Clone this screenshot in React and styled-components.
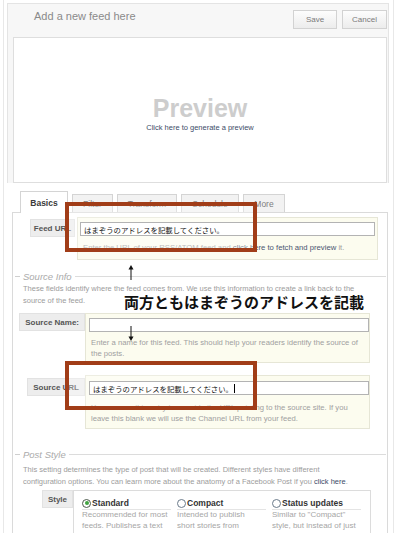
import styled, { createGlobalStyle } from "styled-components";

const FONT = `"Liberation Sans", Arial, "Noto Sans CJK JP", sans-serif`;
const JP_FONT = `"Noto Sans CJK JP", "Liberation Sans", sans-serif`;
const NOTE_RED = "#a13d18";

const GlobalStyle = createGlobalStyle`
  html, body {
    margin: 0;
    padding: 0;
    background: #fff;
  }
  * {
    box-sizing: border-box;
  }
`;

const Page = styled.div`
  position: relative;
  isolation: isolate;
  width: 401px;
  height: 533px;
  overflow: hidden;
  background: #fff;
  font-family: ${FONT};
`;

const Frame = styled.div`
  margin-left: 3px;
  width: 391px;
  height: 100%;
  padding-top: 3px;
  border-left: 1px solid #e8e8e8;
  border-right: 1px solid #e8e8e8;
`;

const Card = styled.div`
  margin-left: 3px;
  width: 382px;
  padding: 0 1px 0 5px;
  background: #f7f7f7;
  border: 1px solid #e4e4e4;
  border-bottom: none;
`;

const Header = styled.div`
  height: 33px;
  display: flex;
  align-items: flex-start;
  justify-content: space-between;
`;

const Title = styled.h1`
  margin: 6px 0 0 21px;
  font-size: 11px;
  line-height: 13px;
  font-weight: normal;
  color: #8a8a8a;
`;

const Actions = styled.div`
  display: flex;
  gap: 5px;
  margin-top: 6px;
`;

const Button = styled.button`
  width: ${(p) => p.$w}px;
  height: 19px;
  padding: 0;
  border: 1px solid #d2d2d2;
  background: linear-gradient(#fdfdfd, #ececec);
  font-family: ${FONT};
  font-size: 8px;
  color: #7a7a7a;
`;

const PreviewBox = styled.div`
  height: 146px;
  padding-top: 6px;
  display: flex;
  flex-direction: column;
  align-items: center;
  justify-content: center;
  background: #fff;
  border: 1px solid #dedede;
`;

const PreviewTitle = styled.div`
  font-size: 25px;
  line-height: 26px;
  font-weight: bold;
  color: #cdcdcd;
`;

const PreviewLink = styled.a`
  margin-top: 2px;
  font-size: 7.5px;
  color: #3d4b68;
  text-decoration: none;
`;

const TabBar = styled.div`
  margin-top: 8px;
  padding-left: 16px;
  height: 21px;
  display: flex;
  align-items: flex-end;
  gap: 4px;
`;

const Tab = styled.div`
  width: ${(p) => p.$w}px;
  height: ${(p) => (p.$active ? 22 : 18)}px;
  margin-bottom: ${(p) => (p.$active ? -1 : 0)}px;
  display: flex;
  align-items: center;
  justify-content: center;
  background: ${(p) => (p.$active ? "#fff" : "#f2f2f2")};
  border: 1px solid #d4d4d4;
  border-bottom: none;
  font-size: 8.5px;
  font-weight: ${(p) => (p.$active ? "bold" : "normal")};
  color: ${(p) => (p.$active ? "#3a3a3a" : "#7e7e7e")};
`;

const Panel = styled.div`
  margin-left: 8px;
  width: 376px;
  height: 330px;
  padding-top: 4px;
  border: 1px solid #dadada;
  border-bottom: none;
`;

const Row = styled.div`
  display: flex;
  align-items: flex-start;
  margin: ${(p) => p.$margin};
`;

const LabelCell = styled.div`
  width: ${(p) => p.$w}px;
  padding-right: ${(p) => p.$gap || 0}px;
  display: flex;
  justify-content: flex-end;
  flex-shrink: 0;
`;

const FieldLabel = styled.div`
  width: ${(p) => (p.$w ? `${p.$w}px` : "auto")};
  height: 18px;
  margin-top: ${(p) => p.$top || 0}px;
  padding: 0 5px;
  display: flex;
  align-items: center;
  justify-content: center;
  background: #ededed;
  border: 1px solid #e2e2e2;
  font-size: 8px;
  font-weight: bold;
  color: #555;
  white-space: nowrap;
`;

const Field = styled.div`
  width: ${(p) => p.$w}px;
  padding: ${(p) => p.$pad};
  background: #fcfcef;
  border: 1px solid #e6e6d6;
`;

const TextBox = styled.div`
  position: relative;
  z-index: 2;
  height: 14px;
  padding-left: 3px;
  display: flex;
  align-items: center;
  background: #fff;
  border: 1px solid #b3b3b3;
  font-family: ${JP_FONT};
  font-size: 7.4px;
  color: #111;
  white-space: nowrap;
`;

const Caret = styled.span`
  display: inline-block;
  width: 1px;
  height: 9px;
  margin-left: 1px;
  background: #000;
`;

const Help = styled.div`
  padding: ${(p) => p.$pad};
  font-size: 7.7px;
  line-height: 11px;
  color: #a0a0a0;
  white-space: nowrap;
`;

const HelpLink = styled.a`
  color: #4a5570;
  text-decoration: none;
`;

const Fieldset = styled.div`
  margin: 0 1px 0 2px;
`;

const Legend = styled.div`
  margin-top: ${(p) => p.$top}px;
  height: 11px;
  display: flex;
  align-items: center;
  &::before {
    content: "";
    width: 5px;
    height: 1px;
    background: #cfcfcf;
  }
  &::after {
    content: "";
    flex: 1;
    height: 1px;
    background: #dcdcdc;
  }
`;

const LegendText = styled.span`
  margin: 0 3px;
  font-size: 9.5px;
  font-style: italic;
  color: #ababab;
`;

const SectionText = styled.p`
  margin: ${(p) => p.$top}px 0 0 8px;
  font-size: 7.5px;
  line-height: 11.5px;
  color: #9c9c9c;
  white-space: nowrap;
`;

const TextLink = styled.a`
  color: #3d4b68;
  text-decoration: none;
`;

const Options = styled.div`
  width: 298px;
  height: 60px;
  padding: 6px 0 0 8px;
  display: flex;
  gap: 6px;
  background: #fff;
  border: 1px solid #dcdcdc;
  border-bottom: none;
`;

const Option = styled.div`
  width: 89px;
  flex-shrink: 0;
`;

const OptionTitle = styled.div`
  height: 13px;
  display: flex;
  align-items: center;
  gap: 1px;
  border-bottom: 1px solid #e4e4e4;
  font-size: 8.5px;
  font-weight: bold;
  color: #333;
`;

const Radio = styled.span`
  width: 9px;
  height: 9px;
  border-radius: 50%;
  border: 1px solid ${(p) => (p.$on ? "#4d5a4d" : "#6a7a8a")};
  background: #fff;
  display: flex;
  align-items: center;
  justify-content: center;
  &::after {
    content: "";
    width: 4px;
    height: 4px;
    border-radius: 50%;
    background: ${(p) => (p.$on ? "#3fa33f" : "transparent")};
  }
`;

const OptionText = styled.div`
  font-size: 8px;
  line-height: 10.5px;
  color: #a6a6a6;
  white-space: nowrap;
`;

/* annotations drawn over the screenshot */
const NoteBox = styled.div`
  position: absolute;
  left: ${(p) => p.$x}px;
  top: ${(p) => p.$y}px;
  width: ${(p) => p.$w}px;
  height: ${(p) => p.$h}px;
  pointer-events: none;
  &::before {
    content: "";
    position: absolute;
    inset: 0;
    z-index: 1;
    background: rgba(255, 255, 255, 0.3);
  }
  &::after {
    content: "";
    position: absolute;
    inset: 0;
    z-index: 3;
    border: 4px solid ${NOTE_RED};
  }
`;

const Arrow = styled.svg`
  position: absolute;
  z-index: 3;
  left: ${(p) => p.$x}px;
  top: ${(p) => p.$y}px;
`;

const NoteText = styled.div`
  position: absolute;
  z-index: 3;
  left: 124px;
  top: 292px;
  font-family: ${JP_FONT};
  font-size: 15px;
  line-height: 20px;
  font-weight: bold;
  color: #111;
  white-space: nowrap;
`;

const tabs = [
  { label: "Basics", w: 48, active: true },
  { label: "Filter", w: 41 },
  { label: "Transform", w: 60 },
  { label: "Schedule", w: 58 },
  { label: "More", w: 42 },
];

const styles = [
  {
    name: "Standard",
    on: true,
    lines: ["Recommended for most", "feeds. Publishes a text", "excerpt and any", "images found."],
  },
  {
    name: "Compact",
    lines: ["Intended to publish", "short stories from", "microblogs like Twitter", "or Identi.ca."],
  },
  {
    name: "Status updates",
    lines: ['Similar to "Compact"', "style, but instead of just", "writing on your wall it", "updates status."],
  },
];

const JP_URL = "はまぞうのアドレスを記載してください。";

function NoteArrow({ x, y, down }) {
  return (
    <Arrow $x={x} $y={y} width="8" height="16" viewBox="0 0 8 16">
      {down ? (
        <>
          <line x1="4" y1="0" x2="4" y2="12" stroke="#111" strokeWidth="1" />
          <path d="M1.5 10.5 L4 15 L6.5 10.5 Z" fill="#111" />
        </>
      ) : (
        <>
          <line x1="4" y1="4" x2="4" y2="16" stroke="#111" strokeWidth="1" />
          <path d="M1.5 5.5 L4 1 L6.5 5.5 Z" fill="#111" />
        </>
      )}
    </Arrow>
  );
}

export default function App() {
  return (
    <Page>
      <GlobalStyle />
      <Frame>
        <Card>
          <Header>
            <Title>Add a new feed here</Title>
            <Actions>
              <Button $w={44}>Save</Button>
              <Button $w={45}>Cancel</Button>
            </Actions>
          </Header>
          <PreviewBox>
            <PreviewTitle>Preview</PreviewTitle>
            <PreviewLink href="#">Click here to generate a preview</PreviewLink>
          </PreviewBox>
        </Card>

        <TabBar>
          {tabs.map((t) => (
            <Tab key={t.label} $w={t.w} $active={t.active}>
              {t.label}
            </Tab>
          ))}
        </TabBar>

        <Panel>
          <Row $margin="0 0 0 17px">
            <LabelCell $w={47} $gap={2}>
              <FieldLabel $top={2} $w={45}>
                Feed URL
              </FieldLabel>
            </LabelCell>
            <Field $w={301} $pad="4px 2px 0">
              <TextBox>{JP_URL}</TextBox>
              <Help $pad="6px 4px 6px 3px">
                Enter the URL of your RSS/ATOM feed and{" "}
                <HelpLink href="#">click here to fetch and preview</HelpLink> it.
              </Help>
            </Field>
          </Row>

          <Fieldset>
            <Legend $top={11}>
              <LegendText>Source Info</LegendText>
            </Legend>
            <SectionText $top={1}>
              These fields identify where the feed comes from. We use this
              information to create a link back to the
              <br />
              source of the feed.
            </SectionText>

            <Row $margin="7px 0 0 5px">
              <LabelCell $w={65}>
                <FieldLabel>Source Name:</FieldLabel>
              </LabelCell>
              <Field $w={285} $pad="4px 0 0 3px">
                <TextBox />
                <Help $pad="5px 4px 3px 2px">
                  Enter a name for this feed. This should help your readers
                  identify the source of
                  <br />
                  the posts.
                </Help>
              </Field>
            </Row>

            <Row $margin="12px 0 0 5px">
              <LabelCell $w={65}>
                <FieldLabel $top={3}>Source URL</FieldLabel>
              </LabelCell>
              <Field $w={285} $pad="5px 0 0 3px">
                <TextBox>
                  {JP_URL}
                  <Caret />
                </TextBox>
                <Help $pad="7px 4px 4px 2px">
                  You can use this entry to override the URL pointing to the
                  source site. If you
                  <br />
                  leave this blank we will use the Channel URL from your feed.
                </Help>
              </Field>
            </Row>

            <Legend $top={20}>
              <LegendText>Post Style</LegendText>
            </Legend>
            <SectionText $top={4}>
              This setting determines the type of post that will be created.
              Different styles have different
              <br />
              configuration options. You can learn more about the anatomy of a
              Facebook Post if you <TextLink href="#">click here</TextLink>.
            </SectionText>

            <Row $margin="3px 0 0 0">
              <LabelCell $w={58}>
                <FieldLabel>Style</FieldLabel>
              </LabelCell>
              <Options>
                {styles.map((s) => (
                  <Option key={s.name}>
                    <OptionTitle>
                      <Radio $on={s.on} />
                      {s.name}
                    </OptionTitle>
                    <OptionText>
                      {s.lines.map((l) => (
                        <div key={l}>{l}</div>
                      ))}
                    </OptionText>
                  </Option>
                ))}
              </Options>
            </Row>
          </Fieldset>
        </Panel>
      </Frame>

      <NoteBox $x={65} $y={202} $w={192} $h={50} />
      <NoteBox $x={65} $y={361} $w={192} $h={49} />
      <NoteArrow x={127} y={264} />
      <NoteArrow x={127} y={326} down />
      <NoteText>両方ともはまぞうのアドレスを記載</NoteText>
    </Page>
  );
}
